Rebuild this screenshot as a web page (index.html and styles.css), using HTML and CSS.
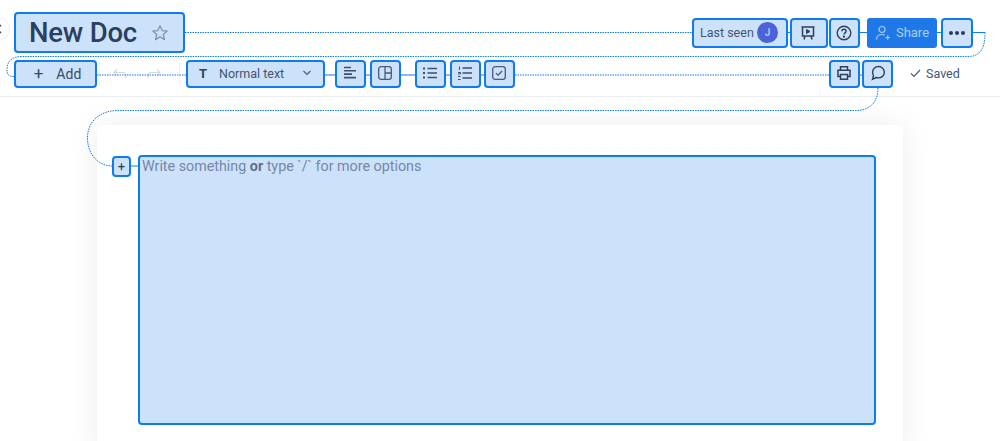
FILE: index.html
```html
<!DOCTYPE html>
<html lang="en">
<head>
  <meta charset="UTF-8" />
  <meta name="viewport" content="width=device-width, initial-scale=1.0"/>
  <title>New Doc</title>
  <link rel="stylesheet" href="styles.css">
</head>
<body>
  <div class="back-btn">
    <svg width="8" height="12" viewBox="0 0 8 12"><path d="M6 2 L2 6 L6 10" fill="none" stroke="#33415c" stroke-width="1.5"/></svg>
  </div>

  <header class="doc-header">
    <div class="top-row">
      <div class="hl title-box">
        <h1>New Doc</h1>
        <svg class="star" width="18" height="18" viewBox="0 0 18 18"><path d="M9 1.8 L11.1 6.6 L16.2 7.1 L12.3 10.5 L13.5 15.6 L9 12.9 L4.5 15.6 L5.7 10.5 L1.8 7.1 L6.9 6.6 Z" fill="none" stroke="#8494b2" stroke-width="1.3" stroke-linejoin="round"/></svg>
      </div>
      <div class="top-actions">
        <div class="hl last-seen">Last seen <span class="avatar">J</span></div>
        <div class="hl btn present">
          <svg width="18" height="18" viewBox="0 0 18 18" fill="none" stroke="#2f3f5c" stroke-width="1.5"><path d="M2.5 3 H15.5 M3.5 3 V12 H14.5 V3"/><path d="M6 12 L5 15.5 M12 12 L13 15.5" /><path d="M7.5 5.5 L11 7.5 L7.5 9.5 Z" fill="#2f3f5c" stroke-width="1"/></svg>
        </div>
        <div class="hl btn help">
          <svg width="18" height="18" viewBox="0 0 18 18" fill="none" stroke="#2f3f5c" stroke-width="1.4"><circle cx="9" cy="9" r="6.8"/><path d="M6.9 7.2 C6.9 4.6 11.1 4.6 11.1 7.2 C11.1 8.9 9 8.9 9 10.6"/><circle cx="9" cy="12.6" r=".5"/></svg>
        </div>
        <div class="share">
          <svg width="16" height="16" viewBox="0 0 16 16" fill="none" stroke="#a9cdf6" stroke-width="1.2"><circle cx="7" cy="4.5" r="3"/><path d="M1.5 14.5 C1.5 10.5 4 9.5 7 9.5 C8 9.5 9 9.6 9.8 10"/><path d="M10.5 12.5 H15 M12.75 10.2 V14.8"/></svg>
          Share
        </div>
        <div class="hl btn more">
          <span class="dot"></span><span class="dot"></span><span class="dot"></span>
        </div>
      </div>
    </div>

    <div class="toolbar">
      <div class="hl add-btn"><span class="plus">+</span> Add</div>
      <div class="history">
        <svg width="16" height="14" viewBox="0 0 16 14" fill="none" stroke="#d3d9e3" stroke-width="1.2"><path d="M5 2.5 L2 5.5 L5 8.5 M2 5.5 H11 C13 5.5 14 7 14 9 V11"/></svg>
        <svg width="16" height="14" viewBox="0 0 16 14" fill="none" stroke="#d3d9e3" stroke-width="1.2"><path d="M11 2.5 L14 5.5 L11 8.5 M14 5.5 H5 C3 5.5 2 7 2 9 V11"/></svg>
      </div>
      <div class="hl text-select">
        <span class="t-mark">T</span>
        <span class="text-label">Normal text</span>
        <svg width="10" height="6" viewBox="0 0 10 6"><path d="M1.5 1 L5 4.5 L8.5 1" fill="none" stroke="#4a5a78" stroke-width="1.1"/></svg>
      </div>
      <div class="group group-format">
        <div class="hl tool">
          <svg width="16" height="16" viewBox="0 0 16 16" stroke="#3f4f6c" stroke-width="1.6"><path d="M2 2.5 H9 M2 5.8 H14 M2 9.1 H10 M2 12.6 H14"/></svg>
        </div>
        <div class="hl tool">
          <svg width="16" height="16" viewBox="0 0 16 16" fill="none" stroke="#4a5a78" stroke-width="1.3"><rect x="1.7" y="1.7" width="12.6" height="12.6" rx="2.4"/><path d="M8 1.7 V14.3 M8 8 H14.3"/></svg>
        </div>
      </div>
      <div class="group group-lists">
        <div class="hl tool">
          <svg width="16" height="16" viewBox="0 0 16 16" stroke="#3f4f6c" stroke-width="1.3"><path d="M5.5 3.5 H15 M5.5 8 H15 M5.5 12.5 H15"/><path d="M1 3.5 H3 M1 8 H3 M1 12.5 H3" stroke-width="1.8"/></svg>
        </div>
        <div class="hl tool">
          <svg width="16" height="16" viewBox="0 0 16 16" stroke="#3f4f6c" stroke-width="1.3"><path d="M5.5 3 H15 M5.5 8 H15 M5.5 13 H15"/><path d="M2.5 1.5 V5 M1 7.5 H3.5 V9 H1 M1 11.5 H3.5 M1 14.5 H3.5" stroke-width="1" fill="none"/></svg>
        </div>
        <div class="hl tool">
          <svg width="16" height="16" viewBox="0 0 16 16" fill="none" stroke="#4a5a78" stroke-width="1.3"><rect x="1.7" y="1.7" width="12.6" height="12.6" rx="2.4"/><path d="M5 8.2 L7.2 10.2 L11 6"/></svg>
        </div>
      </div>
      <div class="group group-end">
        <div class="hl tool">
          <svg width="16" height="16" viewBox="0 0 16 16" fill="none" stroke="#2f3f5c" stroke-width="1.5"><path d="M4.5 5 V1.8 H11.5 V5"/><path d="M4.5 11.5 H2 V5.2 H14 V11.5 H11.5"/><rect x="4.5" y="9.5" width="7" height="4.7"/></svg>
        </div>
        <div class="hl tool tool-comment">
          <svg width="16" height="16" viewBox="0 0 16 16" fill="none" stroke="#2f3f5c" stroke-width="1.4"><path d="M8.5 1.5 C11.8 1.5 14.3 4 14.3 7.2 C14.3 10.4 11.8 12.9 8.5 12.9 C7.7 12.9 7 12.8 6.3 12.5 L2.5 14.2 L3.5 10.8 C2.9 9.9 2.6 8.6 2.6 7.2 C2.6 4 5.2 1.5 8.5 1.5 Z"/></svg>
        </div>
      </div>
      <div class="saved">
        <svg width="11" height="9" viewBox="0 0 11 9"><path d="M1 4.5 L4 7.5 L10 1" fill="none" stroke="#4a5a78" stroke-width="1.2"/></svg>
        Saved
      </div>
    </div>
  </header>

  <main class="doc-area">
    <div class="doc-card">
      <div class="hl block-add">+</div>
      <div class="hl editor">Write something <b>or</b> type `/` for more options</div>
    </div>
  </main>

  <!-- connectors between the highlighted elements -->
  <svg class="wires" width="1000" height="441" viewBox="0 0 1000 441" fill="none" stroke="#0f7bec">
    <g stroke-width="1">
      <path d="M335 75 H325 M370 75 H366 M415 75 H401 M450 75 H446 M484 75 H481 M860 75 H862 M867 32.5 H860 M941 32.5 H937 M973 32.5 H985 M131 166 H138 M788 32.5 H790"/>
    </g>
    <g stroke-width="1" stroke-dasharray="1.5 1">
      <path d="M185 32.5 H692"/>
      <path d="M985 32.5 C985 46 982 56.5 968 56.5 H22 C11 56.5 7 62 7 70 C7 74 8 76.5 14 76.5"/>
      <path d="M97 75 H186"/>
      <path d="M515 75 H829"/>
      <path d="M878 88 C878 102 870 110.5 856 110.5 H118 C99 110.5 87.5 122 87.5 138 C87.5 155 99 166 112 166"/>
    </g>
  </svg>
</body>
</html>
```

FILE: styles.css
```css
* {
  box-sizing: border-box;
}
body {
  margin: 0;
  height: 441px;
  overflow: hidden;
  position: relative;
  font-family: 'Roboto', sans-serif;
  background: #fff;
  color: #323f5a;
}
.hl {
  background: #cce2fb;
  border: 2px solid #0f7bec;
  border-radius: 4px;
}
.back-btn {
  position: absolute;
  left: -14px;
  top: 17px;
  width: 24px;
  height: 24px;
  padding-left: 8px;
  border: 1px solid #eceef2;
  border-radius: 50%;
  display: flex;
  align-items: center;
  background: #fff;
}
.doc-header {
  height: 97px;
  border-bottom: 1px solid #ebedf2;
  padding: 12px 27px 0 14px;
}
.top-row {
  display: flex;
  align-items: center;
  height: 41px;
}
.title-box {
  width: 171px;
  height: 41px;
  display: flex;
  align-items: center;
  padding-left: 13px;
}
h1 {
  margin: 0;
  font-size: 27.5px;
  font-weight: 500;
  color: #2b3f5f;
  letter-spacing: -0.2px;
}
.star {
  margin-left: 14px;
}
.top-actions {
  margin-left: auto;
  display: flex;
  height: 30px;
}
.last-seen {
  width: 96px;
  display: flex;
  align-items: center;
  justify-content: space-between;
  padding: 0 8px 0 6px;
  font-size: 12.5px;
  color: #45556f;
}
.avatar {
  width: 21px;
  height: 21px;
  border-radius: 50%;
  background: #4a63d6;
  color: #a9c4f3;
  font-size: 10px;
  font-weight: 700;
  display: flex;
  align-items: center;
  justify-content: center;
}
.btn {
  display: flex;
  align-items: center;
  justify-content: center;
}
.present {
  width: 38px;
  margin-left: 2px;
  padding-right: 2px;
}
.help {
  width: 31px;
  margin-left: 1px;
  padding-right: 2px;
}
.share {
  width: 70px;
  margin-left: 7px;
  background: #1f78e8;
  border-radius: 3px;
  color: #a9cdf6;
  font-size: 13px;
  display: flex;
  align-items: center;
  justify-content: center;
  gap: 5px;
}
.more {
  width: 32px;
  margin-left: 4px;
  gap: 2px;
}
.dot {
  width: 4px;
  height: 4px;
  border-radius: 50%;
  background: #2b3a55;
}
.toolbar {
  display: flex;
  align-items: center;
  height: 28px;
  margin-top: 7px;
  margin-right: -27px;
}
.add-btn {
  width: 83px;
  height: 28px;
  display: flex;
  align-items: center;
  justify-content: center;
  gap: 13px;
  padding: 0 0 1px 4px;
  font-size: 14px;
  color: #3c4b67;
}
.plus {
  font-size: 17px;
  line-height: 1;
}
.history {
  height: 24px;
  display: flex;
  align-items: center;
  gap: 18px;
  padding-left: 12px;
  border-left: 1px solid #eff1f4;
  border-right: 1px solid #eff1f4;
  margin-left: 2px;
  margin-right: 6px;
  width: 81px;
}
.text-select {
  width: 139px;
  height: 28px;
  display: flex;
  align-items: center;
  padding: 0 11px 2px;
  font-size: 12.5px;
  color: #45556f;
}
.t-mark {
  font-weight: 700;
  font-size: 13px;
  width: 20px;
  color: #33415c;
}
.text-label {
  flex: 1;
}
.group {
  display: flex;
  gap: 4px;
}
.tool {
  width: 31px;
  height: 28px;
  display: flex;
  align-items: center;
  justify-content: center;
  padding: 0 2px 2px 0;
}
.tool-comment {
  padding-right: 0;
}
.group-format {
  margin-left: 10px;
}
.group-lists {
  margin-left: 14px;
  gap: 4px;
}
.group-lists .tool:last-child {
  margin-left: -1px;
}
.group-end {
  margin-left: 314px;
  gap: 2px;
}
.saved {
  margin-left: 17px;
  padding-bottom: 2px;
  display: flex;
  align-items: center;
  gap: 5px;
  font-size: 12.5px;
  color: #45556f;
}
.doc-area {
  padding: 28px 97px 0;
}
.doc-card {
  height: 330px;
  background: #fff;
  border-radius: 6px;
  box-shadow: 0 0 30px rgba(0, 0, 0, 0.08);
  padding: 30px 27px 0 15px;
  display: flex;
  align-items: flex-start;
}
.block-add {
  width: 19px;
  height: 21px;
  margin-top: 1px;
  display: flex;
  align-items: center;
  justify-content: center;
  font-size: 13px;
  color: #2b3a55;
}
.editor {
  margin-left: 7px;
  flex: 1;
  height: 270px;
  padding: 0 2px;
  font-size: 14.3px;
  line-height: 18px;
  color: #7687a6;
}
.editor b {
  color: #5f6f8d;
}
.wires {
  position: absolute;
  left: 0;
  top: 0;
  pointer-events: none;
}
```
